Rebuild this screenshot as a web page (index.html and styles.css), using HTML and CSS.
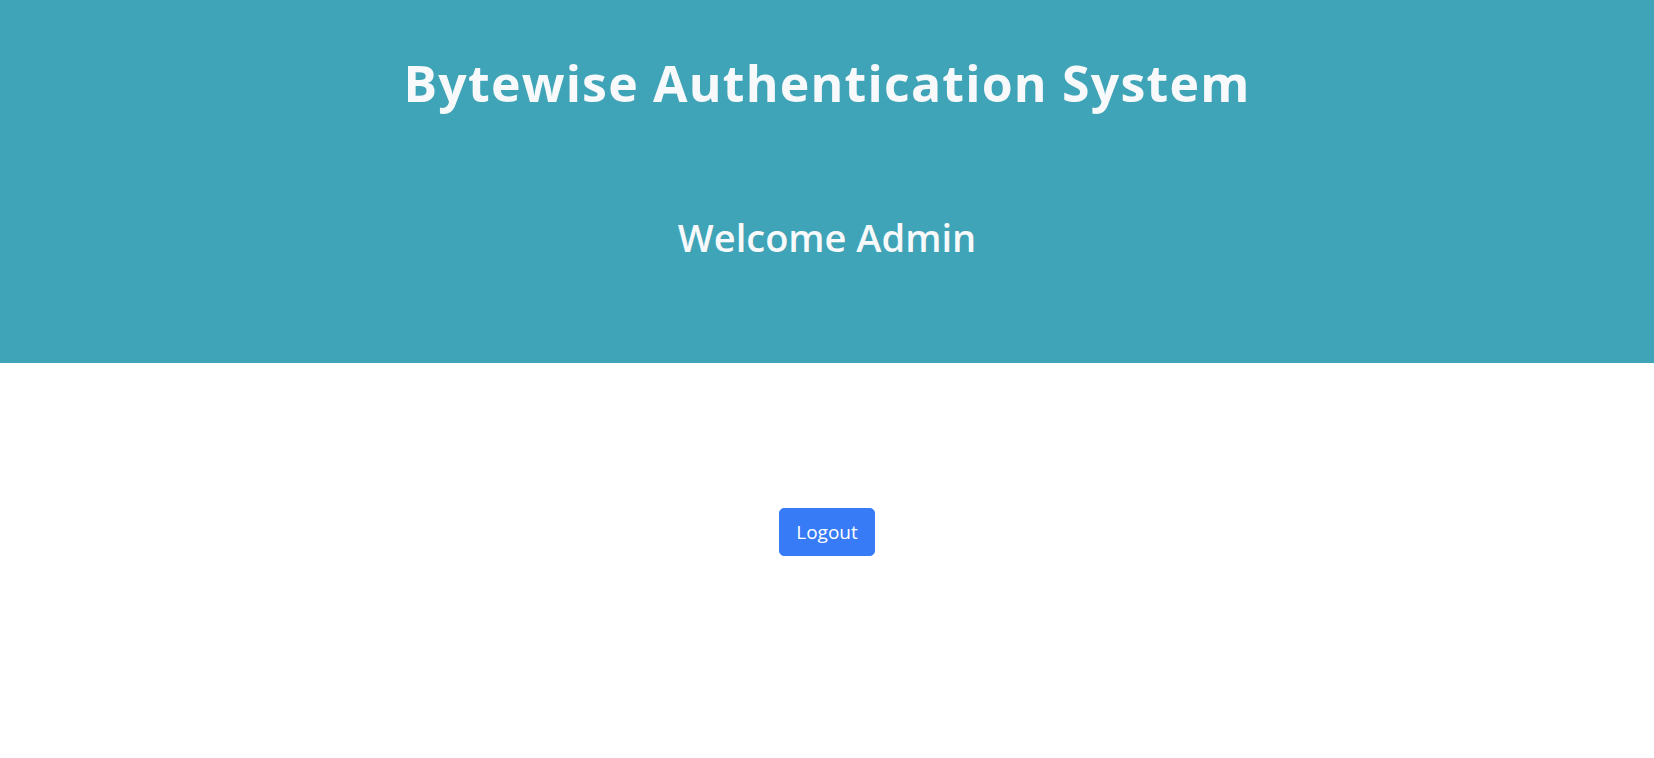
FILE: index.html
```html
<!DOCTYPE html>
<html lang="en">
<head>
<meta charset="utf-8">
<title>Bytewise Authentication System</title>
<link rel="stylesheet" href="styles.css">
</head>
<body>
<header class="hero">
  <h1 class="hero-title">Bytewise Authentication System</h1>
  <h2 class="hero-welcome">Welcome Admin</h2>
</header>
<main class="content">
  <button class="btn-logout" type="button">Logout</button>
</main>
</body>
</html>
```

FILE: styles.css
```css
* { box-sizing: border-box; }
html, body { margin: 0; padding: 0; }
body {
  font-family: "Open Sans", "Noto Sans", "Liberation Sans", sans-serif;
  background: #ffffff;
  color: #212529;
}
.hero {
  background: #3fa4b7;
  height: 363px;
  display: flex;
  flex-direction: column;
  align-items: center;
  padding-top: 53px;
}
.hero-title {
  margin: 0;
  color: #f8f9fa;
  font-size: 50px;
  font-weight: 700;
  line-height: 60px;
  letter-spacing: 1.2px;
}
.hero-welcome {
  margin: 100px 0 0;
  color: #f8f9fa;
  font-size: 38px;
  font-weight: 600;
  line-height: 48px;
}
.content {
  display: flex;
  justify-content: center;
  padding-top: 145px;
}
.btn-logout {
  font-family: inherit;
  background: #377bf6;
  color: #ffffff;
  border: 1px solid #377bf6;
  border-radius: 5px;
  font-size: 19px;
  width: 96px;
  height: 48px;
  padding: 0;
  cursor: pointer;
}
```
